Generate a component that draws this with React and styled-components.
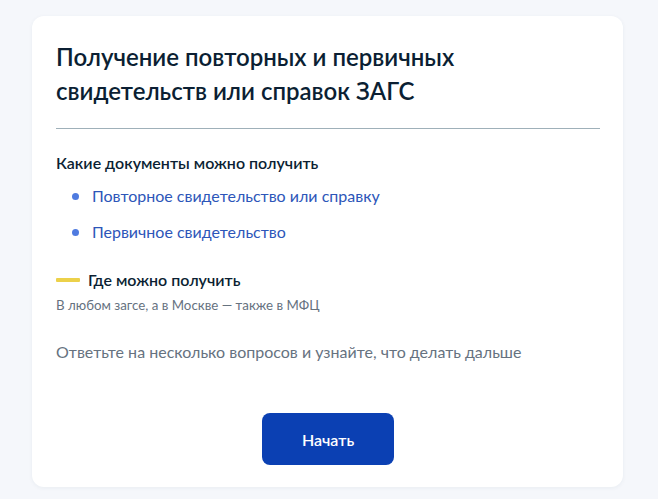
import React from "react";
import styled, { createGlobalStyle } from "styled-components";

const GlobalStyle = createGlobalStyle`
  body {
    margin: 0;
    background: #f5f7fb;
    font-family: Lato, "Noto Sans", sans-serif;
    color: #0b1f33;
  }
`;

const Page = styled.div`
  padding: 16px 35px 12px 32px;
`;

const Card = styled.section`
  background: #fff;
  border-radius: 12px;
  box-shadow: 0 1px 4px rgba(40, 60, 90, 0.06);
  padding: 24px 23px 22px 24px;
  display: flex;
  flex-direction: column;
`;

const Title = styled.h1`
  margin: 0;
  font-size: 24px;
  line-height: 34px;
  font-weight: 600;
`;

const Divider = styled.hr`
  margin: 20px 0 0;
  border: 0;
  border-top: 1px solid #9fb0b9;
`;

const SubTitle = styled.h3`
  margin: ${(p) => p.$top || 0}px 0 0;
  font-size: 16px;
  line-height: 24px;
  font-weight: 600;
  display: flex;
  align-items: center;
`;

const List = styled.ul`
  list-style: none;
  margin: 9px 0 0;
  padding: 0 0 0 16px;
  display: flex;
  flex-direction: column;
  gap: 12px;
`;

const Item = styled.li`
  display: flex;
  align-items: center;
  font-size: 16px;
  line-height: 24px;
  color: #2d56b9;

  &::before {
    content: "";
    width: 7px;
    height: 7px;
    border-radius: 50%;
    background: #4f7be0;
    margin-right: 13px;
  }
`;

const Dash = styled.span`
  width: 24px;
  height: 4px;
  background: #ecd14a;
  border-radius: 1px;
  margin-right: 8px;
`;

const Note = styled.p`
  margin: ${(p) => p.$top || 0}px 0 0;
  font-size: ${(p) => p.$size || 16}px;
  line-height: ${(p) => (p.$size ? 18 : 24)}px;
  color: #66727f;
`;

const StartButton = styled.button`
  align-self: center;
  margin-top: 49px;
  width: 132px;
  height: 52px;
  border: 0;
  border-radius: 8px;
  background: #0b40b3;
  color: #fff;
  font-family: inherit;
  font-size: 16px;
  font-weight: 600;
  cursor: pointer;
`;

export default function App() {
  return (
    <Page>
      <GlobalStyle />
      <Card>
        <Title>
          Получение повторных и первичных
          <br />
          свидетельств или справок ЗАГС
        </Title>
        <Divider />
        <SubTitle $top={22}>Какие документы можно получить</SubTitle>
        <List>
          <Item>Повторное свидетельство или справку</Item>
          <Item>Первичное свидетельство</Item>
        </List>
        <SubTitle $top={24}>
          <Dash />
          Где можно получить
        </SubTitle>
        <Note $size={13.3} $top={4}>В любом загсе, а в Москве — также в МФЦ</Note>
        <Note $top={26}>Ответьте на несколько вопросов и узнайте, что делать дальше</Note>
        <StartButton>Начать</StartButton>
      </Card>
    </Page>
  );
}
